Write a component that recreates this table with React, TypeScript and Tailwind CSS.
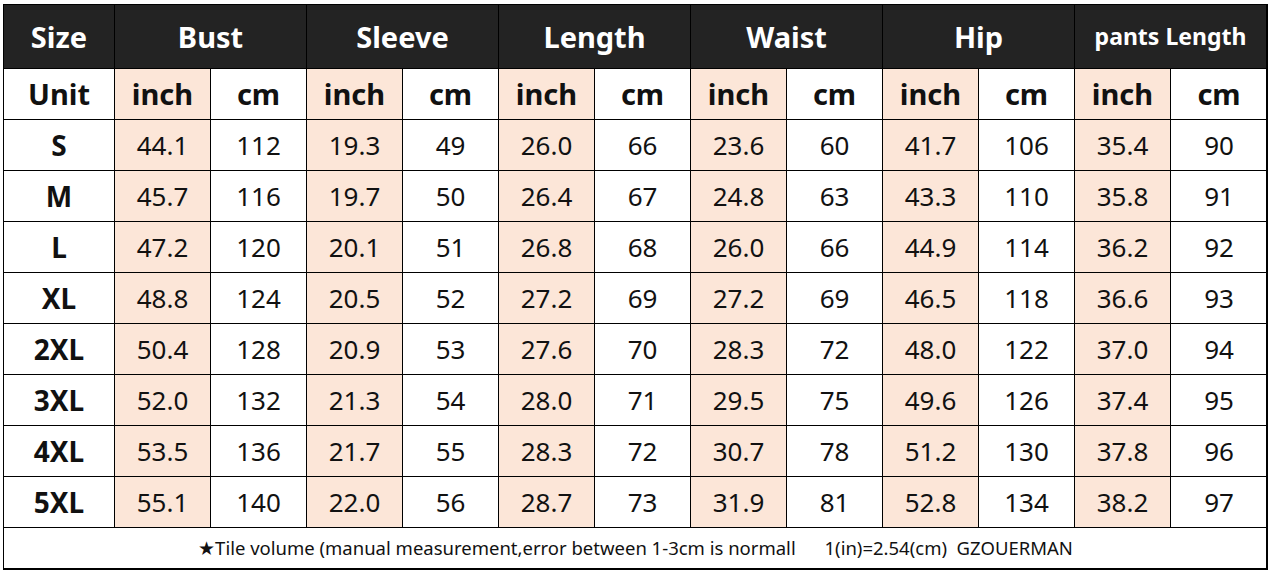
const groups = ["Bust", "Sleeve", "Length", "Waist", "Hip", "pants Length"];

const rows: [string, (string | number)[]][] = [
  ["S", ["44.1", 112, "19.3", 49, "26.0", 66, "23.6", 60, "41.7", 106, "35.4", 90]],
  ["M", ["45.7", 116, "19.7", 50, "26.4", 67, "24.8", 63, "43.3", 110, "35.8", 91]],
  ["L", ["47.2", 120, "20.1", 51, "26.8", 68, "26.0", 66, "44.9", 114, "36.2", 92]],
  ["XL", ["48.8", 124, "20.5", 52, "27.2", 69, "27.2", 69, "46.5", 118, "36.6", 93]],
  ["2XL", ["50.4", 128, "20.9", 53, "27.6", 70, "28.3", 72, "48.0", 122, "37.0", 94]],
  ["3XL", ["52.0", 132, "21.3", 54, "28.0", 71, "29.5", 75, "49.6", 126, "37.4", 95]],
  ["4XL", ["53.5", 136, "21.7", 55, "28.3", 72, "30.7", 78, "51.2", 130, "37.8", 96]],
  ["5XL", ["55.1", 140, "22.0", 56, "28.7", 73, "31.9", 81, "52.8", 134, "38.2", 97]],
];

const cell = "flex items-center justify-center border-r border-b border-black";

export default function App() {
  return (
    <div className="w-[1270px] h-[573px] bg-white pt-[4px] pl-[3px] font-['Noto_Sans','Open_Sans',sans-serif] text-[#111]">
      <div className="grid grid-cols-[111px_repeat(12,96px)] grid-rows-[64px_repeat(9,51px)_40px] w-[1265px] border-l border-t border-r-2 border-b-2 border-black">
        {/* Header */}
        <div className={`${cell} bg-[#232323] text-white font-bold text-[29px]`}>Size</div>
        {groups.map((g) => (
          <div
            key={g}
            className={`${cell} col-span-2 bg-[#232323] text-white font-bold ${g === "pants Length" ? "text-[23px] last:border-r-0" : "text-[29px]"}`}
          >
            {g}
          </div>
        ))}

        {/* Unit row */}
        <div className={`${cell} font-bold text-[29px]`}>Unit</div>
        {groups.map((g, gi) => (
          <div key={g} className="contents">
            <div className={`${cell} bg-[#fce6d8] font-bold text-[29px]`}>inch</div>
            <div className={`${cell} font-bold text-[29px] ${gi === 5 ? "border-r-0" : ""}`}>cm</div>
          </div>
        ))}

        {/* Data */}
        {rows.map(([size, vals]) => (
          <div key={size} className="contents">
            <div className={`${cell} font-bold text-[28px]`}>{size}</div>
            {vals.map((v, i) => (
              <div
                key={i}
                className={`${cell} text-[26px] ${i % 2 === 0 ? "bg-[#fce6d8]" : ""} ${i === 11 ? "border-r-0" : ""}`}
              >
                {v}
              </div>
            ))}
          </div>
        ))}

        {/* Footer */}
        <div className={`${cell} col-span-13 text-[18.5px] whitespace-pre border-r-0 border-b-0`}>
          {"★Tile volume (manual measurement,error between 1-3cm is normall      1(in)=2.54(cm)  GZOUERMAN"}
        </div>
      </div>
    </div>
  );
}
